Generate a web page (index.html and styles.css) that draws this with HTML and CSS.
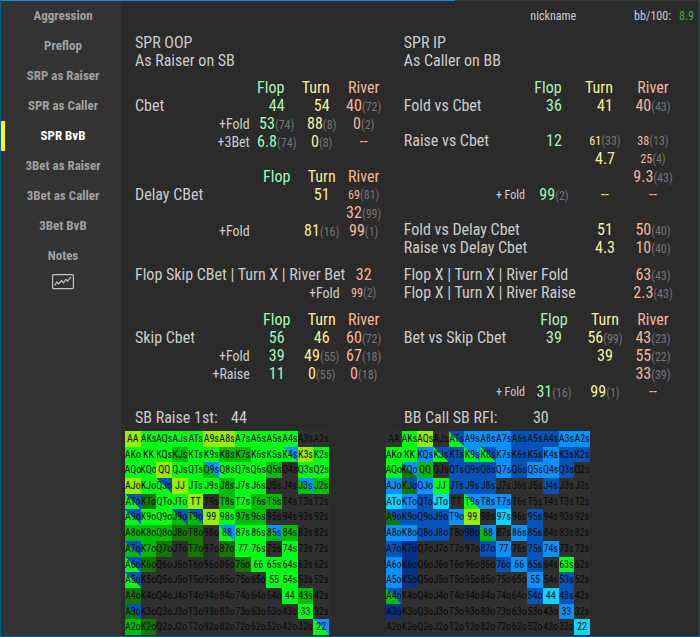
FILE: index.html
```html
<!DOCTYPE html>
<html lang="en">
<head>
<meta charset="utf-8">
<title>SPR BvB</title>
<link rel="stylesheet" href="styles.css">
</head>
<body>
<div class="popup">
  <nav class="side">
    <a href="#aggression">Aggression</a>
    <a href="#preflop">Preflop</a>
    <a href="#srp-raiser">SRP as Raiser</a>
    <a href="#spr-caller">SPR as Caller</a>
    <a href="#spr-bvb" class="active" aria-current="page">SPR BvB</a>
    <a href="#3bet-raiser">3Bet as Raiser</a>
    <a href="#3bet-caller">3Bet as Caller</a>
    <a href="#3bet-bvb">3Bet BvB</a>
    <a href="#notes">Notes</a>
    <a href="#graph" class="graph" aria-label="Graph">
      <svg width="22" height="16" viewBox="0 0 22 16" fill="none" stroke="#c4c4c4" stroke-width="1.2">
        <rect x="0.6" y="0.6" width="20.8" height="14" rx="1"/>
        <path d="M2.5 11.5 L5 8 L6.5 9.8 L9.5 6.5 L11.5 8.8 L14 5.5 L15.5 7 L19 3"/>
      </svg>
    </a>
  </nav>
  <main class="main">
    <header class="player">
      <span class="nick">nickname</span>
      <span>bb/100:</span>
      <span class="rate">8.9</span>
    </header>

    <div class="stats">
      <section class="oop">
        <h2>SPR OOP<br>As Raiser on SB</h2>
        <table>
          <colgroup><col><col class="flop"><col class="turn"><col class="river"></colgroup>
          <tr class="lead"><td></td><th>Flop</th><th>Turn</th><th>River</th></tr>
          <tr><td>Cbet</td><td>44</td><td>54</td><td>40<i>(72)</i></td></tr>
          <tr><td class="sub">+Fold</td><td>53<i>(74)</i></td><td>88<i>(8)</i></td><td>0<i>(2)</i></td></tr>
          <tr><td class="sub">+3Bet</td><td>6.8<i>(74)</i></td><td>0<i>(8)</i></td><td>--</td></tr>
        </table>
        <table class="gap-m">
          <colgroup><col><col class="flop"><col class="turn"><col class="river"></colgroup>
          <tr><td></td><th>Flop</th><th>Turn</th><th>River</th></tr>
          <tr><td>Delay CBet</td><td></td><td>51</td><td class="small">69<i>(81)</i></td></tr>
          <tr><td></td><td></td><td></td><td>32<i>(99)</i></td></tr>
          <tr><td class="sub">+Fold</td><td></td><td>81<i>(16)</i></td><td>99<i>(1)</i></td></tr>
        </table>
        <table class="gap-l">
          <colgroup><col><col class="river"></colgroup>
          <tr><td>Flop Skip CBet | Turn X | River Bet</td><td>32</td></tr>
          <tr><td class="sub">+Fold</td><td class="small">99<i>(2)</i></td></tr>
        </table>
        <table class="gap-s">
          <colgroup><col><col class="flop"><col class="turn"><col class="river"></colgroup>
          <tr><td></td><th>Flop</th><th>Turn</th><th>River</th></tr>
          <tr><td>Skip Cbet</td><td>56</td><td>46</td><td>60<i>(72)</i></td></tr>
          <tr><td class="sub">+Fold</td><td>39</td><td>49<i>(55)</i></td><td>67<i>(18)</i></td></tr>
          <tr><td class="sub">+Raise</td><td>11</td><td>0<i>(55)</i></td><td>0<i>(18)</i></td></tr>
        </table>
      </section>

      <section class="ip">
        <h2>SPR IP<br>As Caller on BB</h2>
        <table>
          <colgroup><col><col class="flop"><col class="turn"><col class="river"></colgroup>
          <tr class="lead"><td></td><th>Flop</th><th>Turn</th><th>River</th></tr>
          <tr><td>Fold vs Cbet</td><td>36</td><td>41</td><td>40<i>(43)</i></td></tr>
        </table>
        <table class="gap-m">
          <colgroup><col><col class="flop"><col class="turn"><col class="river"></colgroup>
          <tr><td>Raise vs Cbet</td><td>12</td><td class="small">61<i>(33)</i></td><td class="small">38<i>(13)</i></td></tr>
          <tr><td></td><td></td><td>4.7</td><td class="small">25<i>(4)</i></td></tr>
          <tr><td></td><td></td><td></td><td>9.3<i>(43)</i></td></tr>
          <tr><td class="sub">+ Fold</td><td>99<i>(2)</i></td><td>--</td><td>--</td></tr>
        </table>
        <table class="gap-m">
          <colgroup><col><col class="turn"><col class="river"></colgroup>
          <tr><td>Fold vs Delay Cbet</td><td>51</td><td>50<i>(40)</i></td></tr>
          <tr><td>Raise vs Delay Cbet</td><td>4.3</td><td>10<i>(40)</i></td></tr>
        </table>
        <table class="gap-s">
          <colgroup><col><col class="river"></colgroup>
          <tr><td>Flop X | Turn X | River Fold</td><td>63<i>(43)</i></td></tr>
          <tr><td>Flop X | Turn X | River Raise</td><td>2.3<i>(43)</i></td></tr>
        </table>
        <table class="gap-s">
          <colgroup><col><col class="flop"><col class="turn"><col class="river"></colgroup>
          <tr><td></td><th>Flop</th><th>Turn</th><th>River</th></tr>
          <tr><td>Bet vs Skip Cbet</td><td>39</td><td>56<i>(99)</i></td><td>43<i>(23)</i></td></tr>
          <tr><td></td><td></td><td>39</td><td>55<i>(22)</i></td></tr>
          <tr><td></td><td></td><td></td><td>33<i>(39)</i></td></tr>
          <tr><td class="sub">+ Fold</td><td>31<i>(16)</i></td><td>99<i>(1)</i></td><td>--</td></tr>
        </table>
      </section>
    </div>

    <div class="charts">
      <section class="raise">
        <h3><span>SB Raise 1st:</span><span>44</span></h3>
        <div class="range" id="sb-raise"></div>
      </section>
      <section class="call">
        <h3><span>BB Call SB RFI:</span><span>30</span></h3>
        <div class="range" id="bb-call"></div>
      </section>
    </div>
  </main>
</div>
<script src="ranges.js"></script>
</body>
</html>
```
FILE: styles.css
```css
* {
  box-sizing: border-box;
}

body {
  margin: 0;
  background: #2b2b2b;
  color: #cccccc;
  font: 16px/18px "Roboto Condensed", Roboto, "Liberation Sans", sans-serif;
}

.popup {
  display: flex;
  min-height: 100vh;
  border: 1px solid #00628f;
  border-top: 0;
  background: linear-gradient(to right, #0090d8 65%, #3a3a3a 65%) top / 100% 1px no-repeat;
  padding-top: 1px;
}

.side {
  display: flex;
  flex-direction: column;
  flex: 0 0 120px;
  background: #333333;
}

.side a {
  height: 30px;
  border-left: 4px solid transparent;
  color: #a0a0a0;
  font-size: 13px;
  font-weight: 700;
  line-height: 30px;
  text-align: center;
  text-decoration: none;
}

.side .active {
  border-color: #ffff00;
  color: #ffffff;
}

.side .graph {
  display: flex;
  justify-content: center;
  padding-top: 3px;
}

.main {
  flex: 1;
  min-width: 0;
}

.player {
  display: flex;
  justify-content: flex-end;
  gap: 8px;
  padding: 6px 5px 0 0;
  font-size: 12px;
}

.nick {
  margin-right: 50px;
}

.rate {
  color: #3fa83f;
}

.stats {
  display: grid;
  grid-template-columns: 11fr 12fr;
  gap: 21px;
  padding: 9px 25px 0 14px;
}

h2,
h3 {
  margin: 0;
  font-size: 16px;
  font-weight: 400;
}

h2 {
  margin-bottom: 9px;
}

table {
  width: 100%;
  border-collapse: collapse;
  table-layout: fixed;
}

tr {
  height: 18px;
}

th,
td {
  height: 18px;
  padding: 0;
  font-weight: 400;
  line-height: 18px;
  text-align: center;
  white-space: nowrap;
}

td:first-child {
  text-align: left;
}

.lead th:not(:last-child) {
  padding-right: 12px;
}

td:first-child.sub {
  padding-right: 5px;
  font-size: 14px;
  text-align: right;
}

.ip td:first-child.sub {
  font-size: 12px;
}

td i {
  color: #757575;
  font-size: 12px;
  font-style: normal;
  line-height: 12px;
}

td.small {
  font-size: 12px;
}

tr > :nth-last-child(3):not(:first-child) {
  color: #a3f5b8;
}

tr > :nth-last-child(2):not(:first-child) {
  color: #f5f09a;
}

tr > :last-child {
  color: #f7b59c;
}

.gap-s {
  margin-top: 9px;
}

.gap-m {
  margin-top: 17px;
}

.gap-l {
  margin-top: 26px;
}

.oop .flop {
  width: 44px;
}

.oop .turn {
  width: 46px;
}

.oop .river {
  width: 38px;
}

.ip .flop {
  width: 48px;
}

.ip .turn {
  width: 54px;
}

.ip .river {
  width: 42px;
}

.charts {
  display: grid;
  grid-template-columns: 5fr 6fr;
  padding: 8px 0 0 4px;
}

h3 {
  display: grid;
  grid-template-columns: 96px auto;
  padding: 0 0 4px 10px;
}

.call h3 {
  grid-template-columns: 129px auto;
  padding-left: 18px;
}

.range {
  display: grid;
  grid-template: repeat(13, 1fr) / repeat(13, 1fr);
  width: 204px;
  height: 204px;
  background: #303030;
  color: #0a0a0a;
  font-size: 10px;
  line-height: 16px;
}

.range span {
  display: flex;
  justify-content: center;
  min-width: 0;
  min-height: 0;
  white-space: nowrap;
  background: linear-gradient(to top right, var(--low) 50%, var(--high) 50%);
}
```
FILE: ranges.js
```js
// G/M/D: greens from strong to weak, L: lime, c/b/N/n: blues from strong to weak.
// Two letters split a cell: lower left first, upper right second.
const COLORS = {
  G: "#00ff14", M: "#00bd08", D: "#147800", L: "#98ee00",
  c: "#0cd6ff", b: "#0a92fa", N: "#0654b8", n: "#053188",
  ".": "transparent"
};

const RANKS = "AKQJT98765432";

const SB_RAISE = `
L  G  G  G  G  L  L  G  G  G  G  .  .
G  G  G  M  G  G  M  M  G  G  Gb L  G
G  G  L  G  G  Mb G  G  G  M  .  G  G
L  G  GN L  G  G  M  G  G  .  .  Mb M
GN D  G  G  L  .  M  G  M  M  .  .  .
GN G  G  MN MN L  G  M  M  .  .  .  .
M  M  M  D  D  .  Gb G  G  Mb M  .  .
MN M  D  .  D  .  D  G  G  .  G  .  .
GN D  .  .  .  .  .  D  G  G  G  .  .
GN .  .  .  .  .  .  .  .  G  G  .  .
D  .  .  .  .  .  .  .  .  .  G  M  .
DN .  .  .  .  .  .  .  .  .  .  G  .
M  D  .  .  .  .  .  .  .  .  .  .  Gb`;

const BB_CALL = `
.  G  L  .  GN b  b  b  N  N  N  b  b
G  G  b  GN N  Gb GN b  N  N  b  N  N
G  Db M  .  N  N  N  b  N  b  b  N  .
b  DN b  G  N  N  N  .  .  .  N  .  .
c  b  N  c  .  Gb b  b  .  .  .  .  .
DN N  N  N  b  L  .  c  .  N  .  .  .
b  b  N  N  .  n  Mb .  b  N  .  .  .
N  n  .  .  .  .  N  b  .  N  b  .  .
b  n  .  .  .  .  .  N  b  N  .  G  .
b  n  .  .  .  .  .  .  .  b  .  N  .
MN .  .  .  .  .  .  .  .  N  c  N  .
n  .  .  .  .  .  .  .  .  .  .  b  .
.  .  .  .  .  .  .  .  .  .  .  .  c`;

function handName(row, col) {
  if (row === col) return RANKS[row] + RANKS[row];
  return col > row
    ? RANKS[row] + RANKS[col] + "s"
    : RANKS[col] + RANKS[row] + "o";
}

function drawRange(id, data) {
  const range = document.getElementById(id);
  data.trim().split(/\s+/).forEach((code, i) => {
    const cell = document.createElement("span");
    cell.textContent = handName(Math.floor(i / 13), i % 13);
    cell.style.setProperty("--low", COLORS[code[0]]);
    cell.style.setProperty("--high", COLORS[code[1] || code[0]]);
    range.append(cell);
  });
}

drawRange("sb-raise", SB_RAISE);
drawRange("bb-call", BB_CALL);
```
